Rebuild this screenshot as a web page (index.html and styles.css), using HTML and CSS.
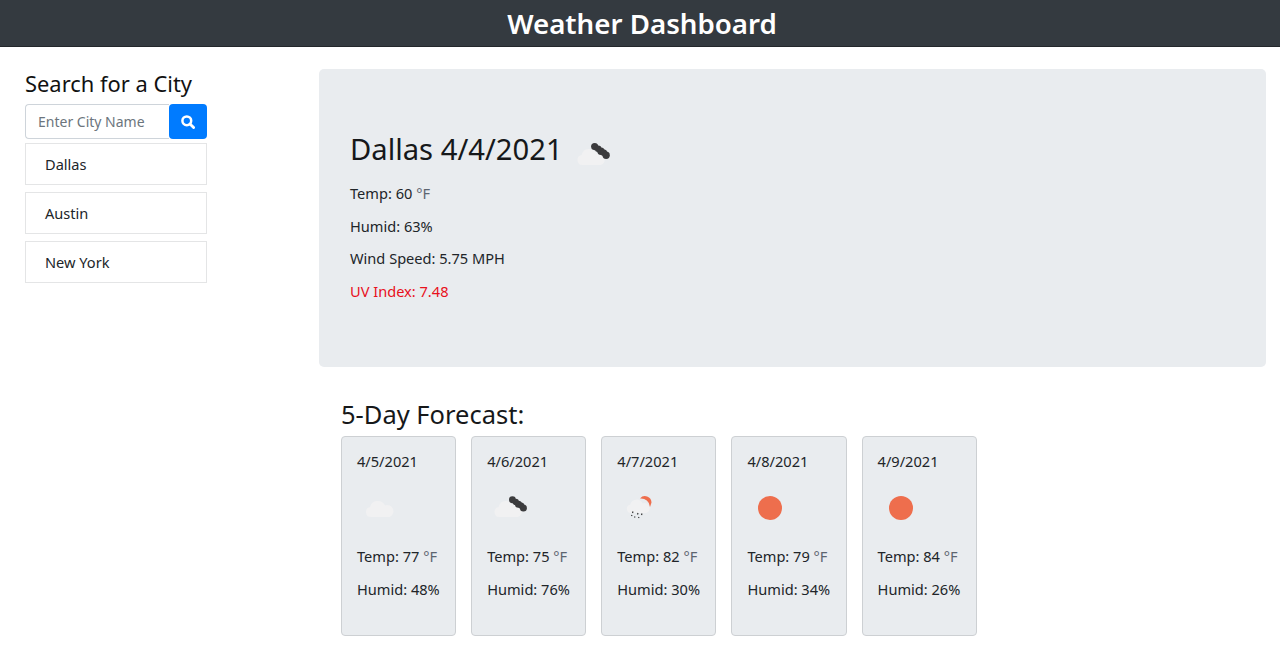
FILE: index.html
```
<!DOCTYPE html>
<html lang="en">
<head>
    <meta charset="UTF-8">
    <title>Weather Dashboard</title>
    <link rel="stylesheet" href="styles.css">
</head>
<body>
    <svg class="defs" width="0" height="0">
        <symbol id="cloud" viewBox="0 0 30 20">
            <path d="M6 19a5 5 0 0 1-1-9.900A8 8 0 0 1 20 7.500a5.800 5.800 0 0 1 4.500 11.500z" fill="#f1f1f2"/>
        </symbol>
        <symbol id="smoke" viewBox="0 0 20 17">
            <g fill="#3b3b3d">
                <circle cx="3.800" cy="3.800" r="3.800"/>
                <circle cx="7.500" cy="6.200" r="3.500"/>
                <circle cx="10.500" cy="8.800" r="3.900"/>
                <circle cx="13.500" cy="10.300" r="3.500"/>
                <circle cx="16" cy="13" r="3.900"/>
            </g>
        </symbol>
    </svg>

    <header>
        <h1>Weather Dashboard</h1>
    </header>

    <main class="layout">
        <aside class="sidebar">
            <h2 class="side-title">Search for a City</h2>
            <form class="search">
                <input type="text" class="search-input" placeholder="Enter City Name">
                <button type="button" class="search-btn" aria-label="Search">
                    <svg width="14" height="14" viewBox="0 0 14 14"><circle cx="5.800" cy="5.800" r="4.400" fill="none" stroke="#fff" stroke-width="2.500"/><path d="M9 9l3.600 3.600" stroke="#fff" stroke-width="2.800" stroke-linecap="round"/></svg>
                </button>
            </form>
            <ul class="cities">
                <li>Dallas</li>
                <li>Austin</li>
                <li>New York</li>
            </ul>
        </aside>

        <section class="content">
            <div class="current">
                <h2 class="current-title">Dallas 4/4/2021
                    <svg class="current-icon" width="36" height="26" viewBox="0 0 36 26">
                        <use href="#cloud" x="0" y="6" width="31" height="20"/>
                        <use href="#smoke" x="15" y="3" width="19" height="16"/>
                    </svg>
                </h2>
                <p>Temp: 60 <span class="unit">°F</span></p>
                <p>Humid: 63%</p>
                <p>Wind Speed: 5.75 MPH</p>
                <p class="uv">UV Index: 7.48</p>
            </div>

            <h3 class="forecast-title">5-Day Forecast:</h3>
            <div class="forecast">
                <div class="day">
                    <p>4/5/2021</p>
                    <svg class="day-icon" width="50" height="50" viewBox="0 0 50 50">
                        <use href="#cloud" x="8" y="15" width="30" height="20"/>
                    </svg>
                    <p>Temp: 77 <span class="unit">°F</span></p>
                    <p>Humid: 48%</p>
                </div>
                <div class="day">
                    <p>4/6/2021</p>
                    <svg class="day-icon" width="50" height="50" viewBox="0 0 50 50">
                        <use href="#cloud" x="6" y="15" width="31" height="20"/>
                        <use href="#smoke" x="22" y="13" width="18" height="16"/>
                    </svg>
                    <p>Temp: 75 <span class="unit">°F</span></p>
                    <p>Humid: 76%</p>
                </div>
                <div class="day">
                    <p>4/7/2021</p>
                    <svg class="day-icon" width="50" height="50" viewBox="0 0 50 50">
                        <use href="#cloud" x="9" y="13" width="25" height="19"/>
                        <path d="M23 15.500a6.500 6.500 0 0 1 11.500 4l-1.500 4.500a9 9 0 0 0-10-8.500z" fill="#ee6e4d"/>
                        <path class="rain" d="M16 28.500l-.5 1.500M21 30l-.5 1.500M25 30.500l-.5 1.500M18 33.500l-.5 1M22 34l-.5 1M15 32l-.5 1"/>
                    </svg>
                    <p>Temp: 82 <span class="unit">°F</span></p>
                    <p>Humid: 30%</p>
                </div>
                <div class="day">
                    <p>4/8/2021</p>
                    <svg class="day-icon" width="50" height="50" viewBox="0 0 50 50">
                        <circle cx="23" cy="25" r="12" fill="#ee6e4d"/>
                    </svg>
                    <p>Temp: 79 <span class="unit">°F</span></p>
                    <p>Humid: 34%</p>
                </div>
                <div class="day">
                    <p>4/9/2021</p>
                    <svg class="day-icon" width="50" height="50" viewBox="0 0 50 50">
                        <circle cx="23" cy="25" r="12" fill="#ee6e4d"/>
                    </svg>
                    <p>Temp: 84 <span class="unit">°F</span></p>
                    <p>Humid: 26%</p>
                </div>
            </div>
        </section>
    </main>
</body>
</html>
```

FILE: styles.css
```
* {
    box-sizing: border-box;
}

body {
    font-family: "Noto Sans", "Open Sans", sans-serif;
    font-size: 14.600px;
    line-height: 1.5;
    color: #212529;
    margin: 0;
    background-color: #fff;
}

.defs {
    position: absolute;
}

header {
    background-color: #343a40;
    border-bottom: 1px solid #23272b;
    color: white;
    height: 47px;
    padding-left: 4px;
    text-align: center;
}

header h1 {
    font-size: 27.700px;
    font-weight: 600;
    line-height: 46px;
    margin: 0;
}

.layout {
    display: flex;
    padding: 0 14px 0 25px;
}

.sidebar {
    width: 182px;
    margin-right: 112px;
    padding-top: 22px;
}

.side-title {
    font-size: 21.900px;
    font-weight: 400;
    line-height: 30px;
    margin: 0 0 5px;
    color: #111;
}

.search {
    display: flex;
    height: 35px;
}

.search-input {
    flex: 1;
    min-width: 0;
    font: inherit;
    font-size: 14px;
    padding: 0 12px;
    border: 1px solid #ced4da;
    border-right: 0;
    border-radius: 4px 0 0 4px;
}

.search-input::placeholder {
    color: #6c757d;
}

.search-btn {
    width: 38px;
    padding: 0;
    border: 0;
    border-radius: 4px;
    background-color: #007bff;
    display: flex;
    align-items: center;
    justify-content: center;
}

.cities {
    list-style: none;
    margin: 4px 0 0;
    padding: 0;
}

.cities li {
    height: 42px;
    line-height: 40px;
    padding-left: 19px;
    margin-bottom: 7px;
    border: 1px solid #e4e5e6;
}

.content {
    flex: 1;
    padding-top: 22px;
}

.current {
    height: 298px;
    background-color: #e9ecef;
    border-radius: 5px;
    padding: 60px 31px 0;
}

.current-title {
    font-size: 29.200px;
    font-weight: 400;
    line-height: 40px;
    margin: 0 0 13px;
    color: #16181a;
}

.current-icon {
    vertical-align: -6px;
    margin-left: 6px;
}

.current p {
    margin: 0 0 10.700px;
    line-height: 22px;
}

.day p {
    margin: 0 0 11px;
    line-height: 22px;
}

.unit {
    color: #5d6570;
}

.current .uv {
    color: #e8101c;
}

.rain {
    fill: none;
    stroke: #333;
    stroke-width: 1.200px;
}

.forecast-title {
    font-size: 25.500px;
    font-weight: 400;
    line-height: 32px;
    margin: 31px 0 6px 22px;
    color: #16181a;
}

.forecast {
    display: flex;
    gap: 15px;
    margin-left: 22px;
}

.day {
    width: 115.150px;
    height: 200px;
    background-color: #e9ecef;
    border: 1px solid #cdd0d3;
    border-radius: 4px;
    padding: 13px 0 0 15px;
}

.day .day-icon {
    display: block;
    margin: 0 0 12px;
}
```
